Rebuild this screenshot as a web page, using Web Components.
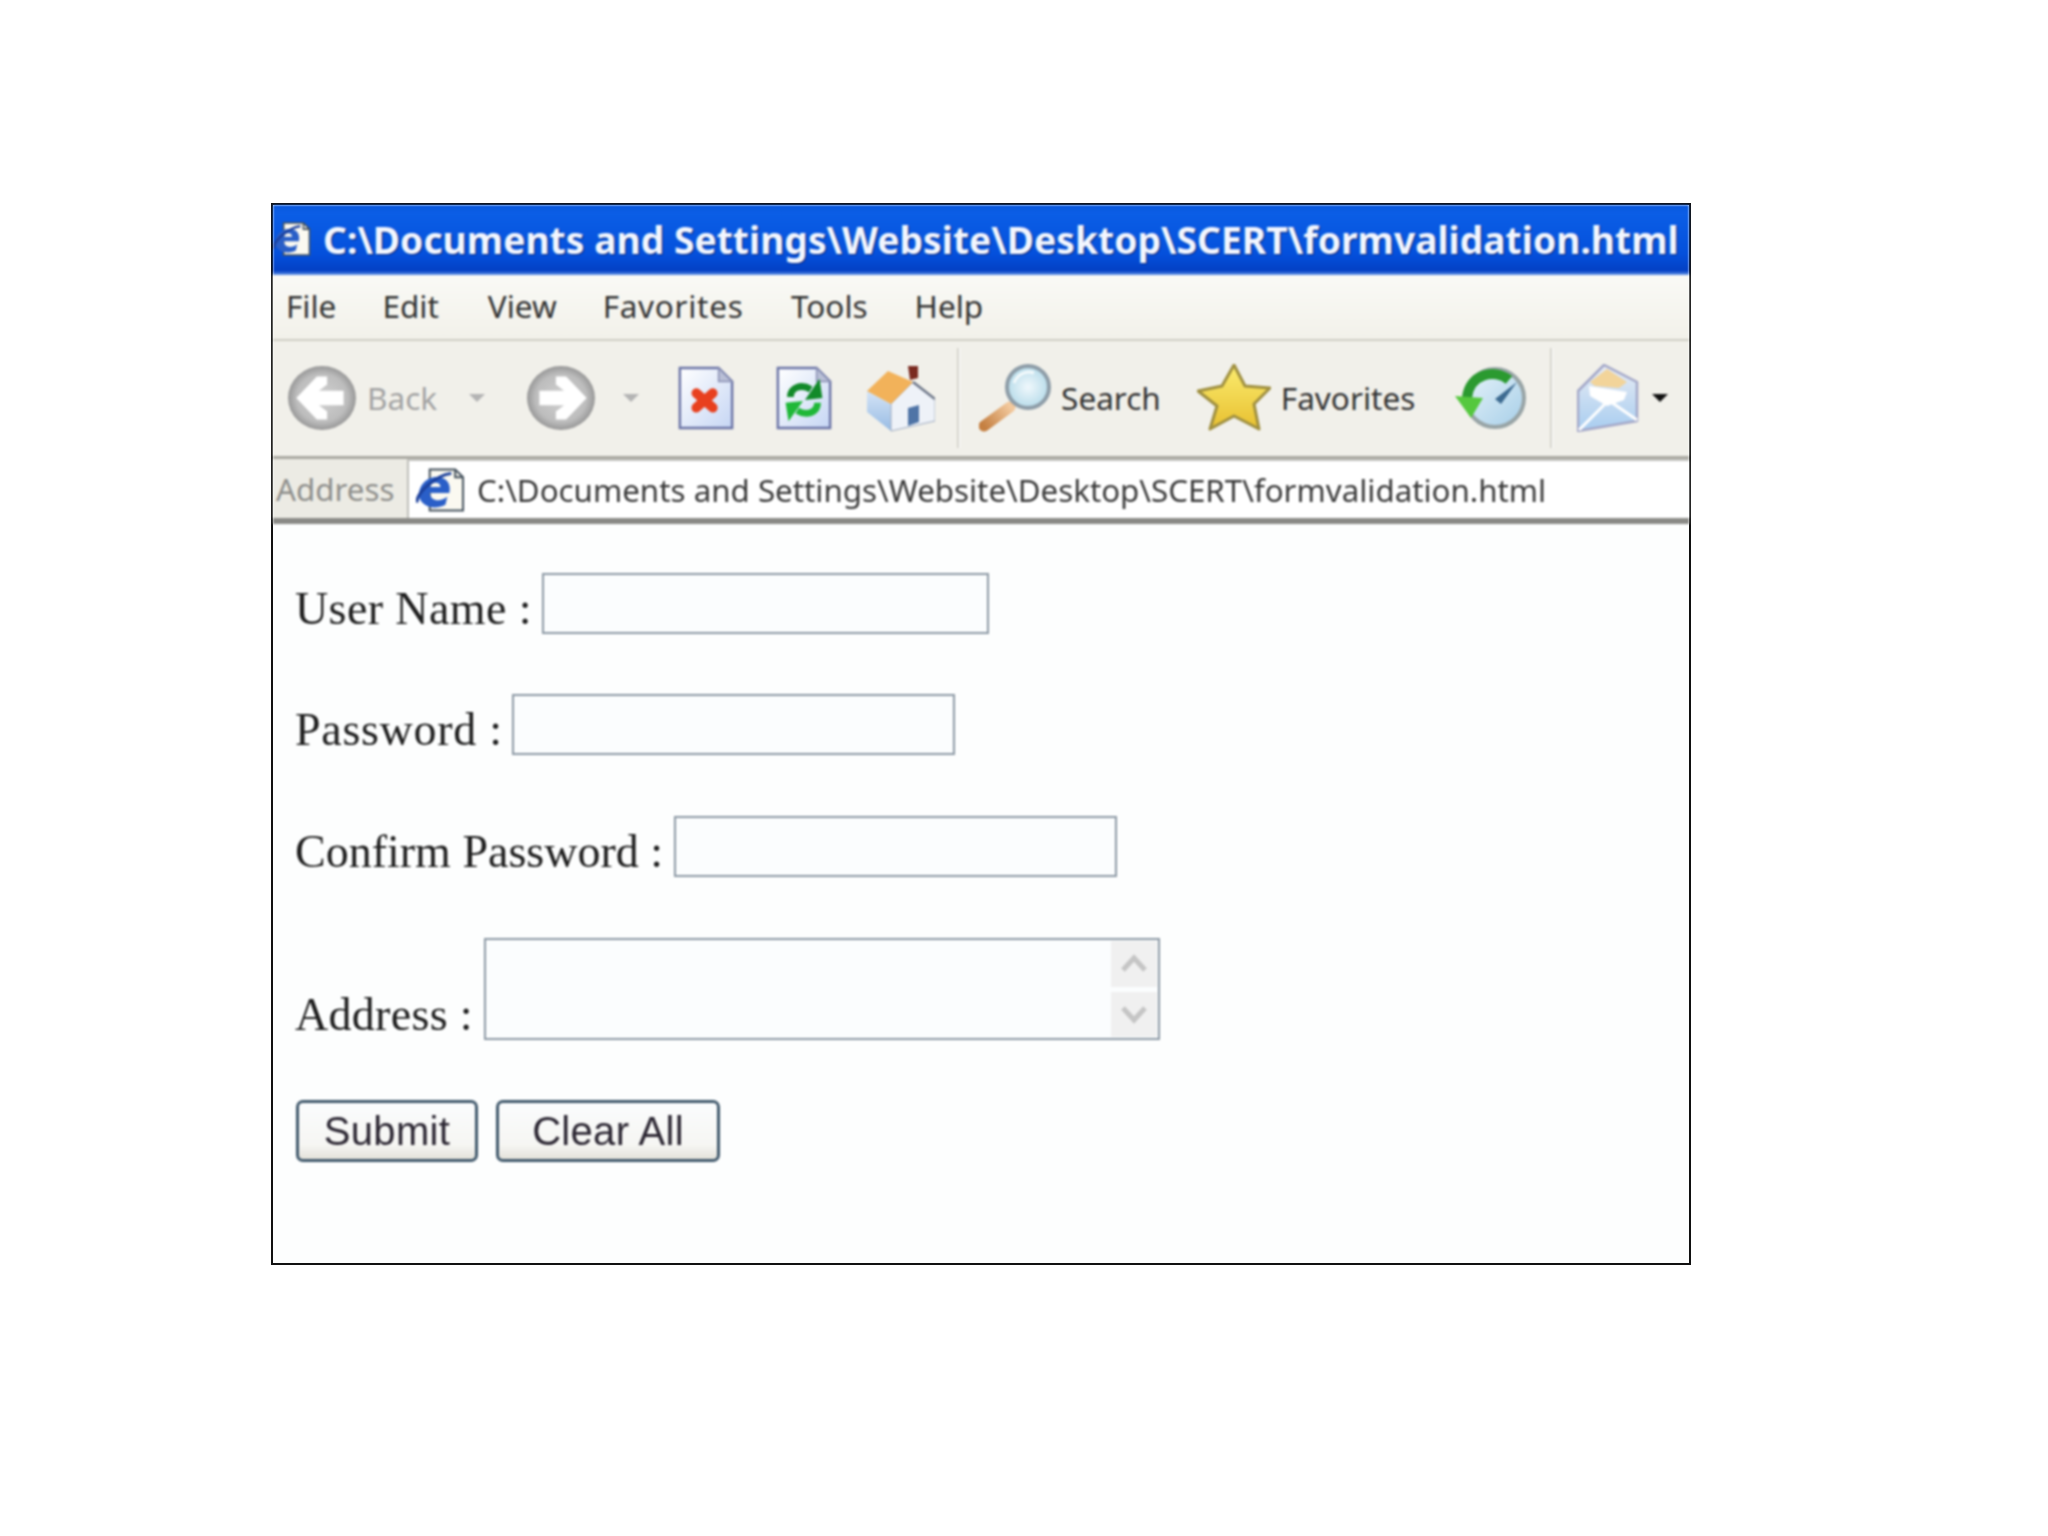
<!DOCTYPE html>
<html lang="en">
<head>
<meta charset="utf-8">
<title>Form validation</title>
<style>
  html, body { margin: 0; background: #fff; }
  body { padding: 203px 0 0 271px; height: 1333px; overflow: hidden; }
</style>
</head>
<body>
<xp-window>
  <xp-titlebar slot="chrome">C:\Documents and Settings\Website\Desktop\SCERT\formvalidation.html</xp-titlebar>
  <xp-menubar slot="chrome">
    <span style="margin-left:13px">File</span>
    <span style="margin-left:46px">Edit</span>
    <span style="margin-left:49px">View</span>
    <span style="margin-left:46px;letter-spacing:.7px">Favorites</span>
    <span style="margin-left:47.5px">Tools</span>
    <span style="margin-left:47px">Help</span>
  </xp-menubar>
  <xp-toolbar slot="chrome">
    <xp-tool icon="back" w="70" h="66" style="margin-left:14px" muted>Back</xp-tool>
    <xp-drop style="margin-left:32px" muted></xp-drop>
    <xp-tool icon="forward" w="70" h="66" style="margin-left:41px"></xp-tool>
    <xp-drop style="margin-left:27px" muted></xp-drop>
    <xp-tool icon="stop" w="60" h="66" style="margin-left:37px"></xp-tool>
    <xp-tool icon="refresh" w="60" h="66" style="margin-left:38px"></xp-tool>
    <xp-tool icon="home" w="68" h="68" style="margin-left:33px"></xp-tool>
    <xp-sep style="margin-left:22px"></xp-sep>
    <xp-tool icon="search" w="72" h="68" style="margin-left:19px">Search</xp-tool>
    <xp-tool icon="star" w="74" h="68" style="margin-left:36px">Favorites</xp-tool>
    <xp-tool icon="media" w="72" h="64" style="margin-left:40px"></xp-tool>
    <xp-sep style="margin-left:23px"></xp-sep>
    <xp-tool icon="mail" w="64" h="68" style="margin-left:24px"></xp-tool>
    <xp-drop style="margin-left:11px"></xp-drop>
  </xp-toolbar>
  <xp-addressbar slot="chrome">C:\Documents and Settings\Website\Desktop\SCERT\formvalidation.html</xp-addressbar>

  <form-field width="447" gap="10.6" spacing=".4">User Name :</form-field>
  <form-field width="443" gap="9" spacing=".7" style="margin-top:60px" type="password">Password :</form-field>
  <form-field width="443" gap="11" style="margin-top:61px" type="password">Confirm Password :</form-field>
  <form-field width="676" gap="11.3" spacing=".3" style="margin-top:61px" multiline>Address :</form-field>
  <form-actions style="margin-top:60px">
    <xp-button style="width:182px">Submit</xp-button>
    <xp-button style="width:224px">Clear All</xp-button>
  </form-actions>
</xp-window>

<script>
const PAGE = (inner) => `
  <path d="M4 2H44L58 16V64H4Z" fill="url(#page)" stroke="#6b74a6" stroke-width="2.5"/>
  <path d="M44 2V16H58Z" fill="#b9bfd6" stroke="#8a90b4" stroke-width="1.5"/>
  ${inner}`;

const ICONS = {
  back: {
    box: "0 0 68 64",
    svg: `<ellipse cx="34" cy="32" rx="33" ry="31" fill="url(#disc)"/>
      <path d="M9 32 29 11H39V19L31 25H55V39H31L39 45V53H29Z" fill="#fff"/>`,
  },
  forward: {
    box: "0 0 68 64",
    svg: `<ellipse cx="34" cy="32" rx="33" ry="31" fill="url(#disc)"/>
      <path d="M59 32 39 11H29V19L37 25H13V39H37L29 45V53H39Z" fill="#fff"/>`,
  },
  stop: {
    box: "0 0 62 66",
    svg: PAGE(`<path d="M21 28 38 43M38 28 21 43" stroke="#e8401e" stroke-width="10" stroke-linecap="round"/>`),
  },
  refresh: {
    box: "0 0 62 66",
    svg: PAGE(`<path d="M17 32C17 22 28 18 38 24" fill="none" stroke="#128a2a" stroke-width="7"/>
      <path d="M32 35 50 33 47 13Z" fill="#128a2a"/>
      <path d="M45 38C45 48 34 52 24 46" fill="none" stroke="#1fb838" stroke-width="7"/>
      <path d="M30 36 12 38 15 57Z" fill="#1fb838"/>`),
  },
  home: {
    box: "0 0 68 68",
    svg: `<path d="M0 27 24 40V67L0 48Z" fill="url(#wall)"/>
      <path d="M24 40 46 18 68 35V57L24 67Z" fill="#eef2f8" stroke="#a0acc0" stroke-width="1"/>
      <path d="M41 2H51V14L43 16Z" fill="#7a2a20"/>
      <path d="M0 27 21 7 46 18 24 40Z" fill="#f2b25a"/>
      <path d="M46 18 68 35" stroke="#6d7688" stroke-width="2.5"/>
      <path d="M41 44 52 41V58L41 62Z" fill="#4f74a6"/>`,
  },
  search: {
    box: "0 0 72 68",
    svg: `<path d="M31 43 5 62" stroke="url(#handle)" stroke-width="11" stroke-linecap="round"/>
      <circle cx="49" cy="23" r="21" fill="url(#lens)" stroke="#8e9da8" stroke-width="4"/>
      <path d="M35 19C38 10 48 6 55 9" stroke="#fff" stroke-width="3" fill="none" opacity=".8"/>`,
  },
  star: {
    box: "0 0 74 68",
    svg: `<path d="M37 1 48 22 73 24 57 40 62 65 37 52 13 65 20 42 1 27 25 22Z" fill="url(#gold)" stroke="#a09040" stroke-width="3" stroke-linejoin="round"/>`,
  },
  media: {
    box: "0 0 72 64",
    svg: `<circle cx="40" cy="32" r="29" fill="url(#globe)" stroke="#98a4a6" stroke-width="4"/>
      <path d="M62 16 40 33 46 38Z" fill="#3c6a90"/>
      <path d="M54 14C40 2 14 8 12 32" fill="none" stroke="#2b9a30" stroke-width="10"/>
      <path d="M0 30 28 32 16 52Z" fill="#55c83e"/>`,
  },
  mail: {
    box: "0 0 64 68",
    svg: `<path d="M1 27 27 1 60 18V57L1 67Z" fill="url(#env)" stroke="#a4a8c8" stroke-width="2.5" stroke-linejoin="round"/>
      <path d="M13 18 30 5 50 18 42 24 18 22Z" fill="#f2d49a"/>
      <path d="M12 22 50 28 47 36 30 42 13 32Z" fill="#fff"/>
      <path d="M2 66 28 40M60 56 34 38" fill="none" stroke="#fff" stroke-width="3"/>`,
  },
  ie: {
    box: "0 0 50 46",
    svg: `<path d="M14 2H40L48 10V44H14Z" fill="#fbf9f1" stroke="#43505c" stroke-width="2"/>
      <path d="M40 2V10H48" fill="none" stroke="#43505c" stroke-width="2"/>
      <path d="M3 30C2 18 12 8 24 10 32 11 36 18 34 26H14C15 34 24 36 32 30L30 38C18 44 6 40 3 30ZM14 20H25C25 14 16 14 14 20Z" fill="#2a5fc8"/>
      <path d="M1 36C0 26 20 8 36 6" fill="none" stroke="#1b3f9a" stroke-width="3"/>`,
  },
};

const GRADIENTS = `<defs>
  <linearGradient id="page" x1="0" y1="0" x2="1" y2="1"><stop offset="0" stop-color="#fff"/><stop offset="1" stop-color="#c6d6f4"/></linearGradient>
  <radialGradient id="disc" cx=".5" cy=".5" r=".5"><stop offset="0" stop-color="#d0d0d0"/><stop offset=".75" stop-color="#bdbdbd"/><stop offset="1" stop-color="#989898"/></radialGradient>
  <linearGradient id="wall" x1="0" y1="0" x2="0" y2="1"><stop offset="0" stop-color="#d4e4f6"/><stop offset="1" stop-color="#98bce4"/></linearGradient>
  <linearGradient id="handle" gradientUnits="userSpaceOnUse" x1="5" y1="62" x2="31" y2="43"><stop offset="0" stop-color="#c58042"/><stop offset="1" stop-color="#f2c89c"/></linearGradient>
  <radialGradient id="lens"><stop offset="0" stop-color="#f0f8fc"/><stop offset="1" stop-color="#b8dcea"/></radialGradient>
  <linearGradient id="gold" x1="0" y1="0" x2="0" y2="1"><stop offset="0" stop-color="#fbec70"/><stop offset="1" stop-color="#e8c030"/></linearGradient>
  <linearGradient id="globe" x1="0" y1="0" x2="1" y2="1"><stop offset="0" stop-color="#e8f4fa"/><stop offset="1" stop-color="#a6cee8"/></linearGradient>
  <linearGradient id="env" x1="0" y1="0" x2="0" y2="1"><stop offset="0" stop-color="#e8ecf4"/><stop offset="1" stop-color="#a8cdf0"/></linearGradient>
</defs>`;

const UI_FONT = `"Noto Sans", "DejaVu Sans", sans-serif`;

// small helper so every element below stays a few lines long
function shadow(el, html) {
  el.attachShadow({ mode: "open" }).innerHTML = html;
}

class XpIcon extends HTMLElement {
  connectedCallback() {
    const icon = ICONS[this.getAttribute("name")];
    const w = this.getAttribute("w");
    const h = this.getAttribute("h");
    shadow(this, `<style>:host{display:block;line-height:0}</style>
      <svg width="${w}" height="${h}" viewBox="${icon.box}">${GRADIENTS}${icon.svg}</svg>`);
  }
}

class XpWindow extends HTMLElement {
  constructor() {
    super();
    // the reference is a soft upscaled capture, so the inside gets a slight blur; the frame stays crisp
    shadow(this, `<style>
      :host { display:block; box-sizing:border-box; width:1420px; height:1062px; border:2px solid #111; background:#fdfefe; }
      .inner { display:flex; flex-direction:column; height:100%; overflow:hidden; filter:blur(.9px); }
      .content { display:flex; flex-direction:column; padding:49px 0 0 22px; }
    </style>
    <div class="inner">
      <slot name="chrome"></slot>
      <div class="content"><slot></slot></div>
    </div>`);
  }
}

class XpTitlebar extends HTMLElement {
  constructor() {
    super();
    shadow(this, `<style>
      :host { display:flex; align-items:center; gap:12px; height:70px; box-sizing:border-box; padding-bottom:2px;
              background:linear-gradient(#0a58dc,#0b5ee6 12%,#0450dc 70%,#0340c4 94%,#6a9ae8);
              color:#f2f6ff; font:700 37.25px ${UI_FONT}; white-space:nowrap; text-shadow:1px 1px 1px #0a2a80; }
    </style><xp-icon name="ie" w="38" h="40"></xp-icon><slot></slot>`);
  }
}

class XpMenubar extends HTMLElement {
  constructor() {
    super();
    shadow(this, `<style>
      :host { display:flex; align-items:center; height:66px; box-sizing:border-box; padding-bottom:3px;
              background:linear-gradient(#fafaf6,#f2f1ea); border-bottom:2px solid #cfcec4;
              color:#333; font:31.5px ${UI_FONT}; }
    </style><slot></slot>`);
  }
}

class XpToolbar extends HTMLElement {
  constructor() {
    super();
    shadow(this, `<style>
      :host { display:flex; align-items:center; height:118px; box-sizing:border-box; padding-bottom:2px;
              background:#f1f0ea; border-bottom:3px solid #aaa9a2; font:31.5px ${UI_FONT}; color:#333; }
    </style><slot></slot>`);
  }
}

class XpTool extends HTMLElement {
  connectedCallback() {
    const muted = this.hasAttribute("muted");
    shadow(this, `<style>
      :host { display:flex; align-items:center; gap:10px; flex:none; color:${muted ? "#a3a3a3" : "#333"}; }
    </style>
    <xp-icon name="${this.getAttribute("icon")}" w="${this.getAttribute("w")}" h="${this.getAttribute("h")}"></xp-icon>
    <slot></slot>`);
  }
}

class XpDrop extends HTMLElement {
  connectedCallback() {
    const color = this.hasAttribute("muted") ? "#b4b4b4" : "#111";
    shadow(this, `<style>
      :host { display:block; width:0; height:0; flex:none; border:8px solid transparent; border-bottom:0;
              border-top-color:${color}; }
    </style>`);
  }
}

class XpSep extends HTMLElement {
  constructor() {
    super();
    shadow(this, `<style>
      :host { display:block; flex:none; width:2px; height:100px; background:#d5d4cc; border-right:1px solid #fff; }
    </style>`);
  }
}

class XpAddressbar extends HTMLElement {
  constructor() {
    super();
    shadow(this, `<style>
      :host { display:flex; height:65px; box-sizing:border-box; background:#ecebe4;
              border-bottom:6px solid #8a8a86; font:31.3px ${UI_FONT}; }
      .label { width:134px; box-sizing:border-box; padding:0 0 0 3px; display:flex; align-items:center; color:#8f8f8c; }
      .field { flex:1; display:flex; align-items:center; gap:12px; padding:0 0 0 7px; background:#fff;
               border-left:2px solid #bfbfba; border-top:2px solid #c4c4c0; color:#3a3a3a; white-space:nowrap; }
    </style>
    <div class="label">Address</div>
    <div class="field"><xp-icon name="ie" w="49" h="46"></xp-icon><slot></slot></div>`);
  }
}

class FormField extends HTMLElement {
  connectedCallback() {
    const width = this.getAttribute("width");
    const gap = this.getAttribute("gap");
    const spacing = this.getAttribute("spacing") || 0;
    const type = this.getAttribute("type") || "text";
    const control = this.hasAttribute("multiline")
      ? `<div class="area"><textarea></textarea>
           <div class="bar">
             <div class="btn"><svg width="30" height="22" viewBox="0 0 30 22"><path d="M4 17 15 5 26 17" fill="none" stroke="#c5c5c5" stroke-width="5"/></svg></div>
             <div class="btn"><svg width="30" height="22" viewBox="0 0 30 22"><path d="M4 5 15 17 26 5" fill="none" stroke="#c5c5c5" stroke-width="5"/></svg></div>
           </div></div>`
      : `<input type="${type}">`;
    shadow(this, `<style>
      :host { display:flex; align-items:flex-end; gap:${gap}px; font:46px "Liberation Serif", serif; color:#1e1e1e; letter-spacing:${spacing}px; }
      .label { line-height:1; padding-bottom:2px; white-space:nowrap; }
      input, textarea { display:block; box-sizing:border-box; margin:0; width:${width}px; height:61px; padding:0;
                        border:2.5px solid #8c98a4; background:#fbfdfe; outline:none; resize:none; overflow:hidden; }
      .area { position:relative; }
      textarea { height:102px; }
      .bar { position:absolute; top:3px; right:3px; bottom:3px; width:46px; display:flex; flex-direction:column; gap:5px; }
      .btn { flex:1; background:#f0f0f0; display:flex; align-items:center; justify-content:center; }
    </style><span class="label"><slot></slot></span>${control}`);
  }
}

class FormActions extends HTMLElement {
  constructor() {
    super();
    shadow(this, `<style>:host { display:flex; gap:18px; margin-left:1px; }</style><slot></slot>`);
  }
}

class XpButton extends HTMLElement {
  constructor() {
    super();
    shadow(this, `<style>
      :host { display:flex; align-items:center; justify-content:center; box-sizing:border-box; height:62px;
              border:3px solid #41596c; border-radius:7px; background:linear-gradient(#fbfcfd,#f6f6f3 75%,#e4e2da);
              font:40px "Liberation Sans", sans-serif; letter-spacing:.3px; color:#2c2733; }
    </style><slot></slot>`);
  }
}

customElements.define("xp-icon", XpIcon);
customElements.define("xp-window", XpWindow);
customElements.define("xp-titlebar", XpTitlebar);
customElements.define("xp-menubar", XpMenubar);
customElements.define("xp-toolbar", XpToolbar);
customElements.define("xp-tool", XpTool);
customElements.define("xp-drop", XpDrop);
customElements.define("xp-sep", XpSep);
customElements.define("xp-addressbar", XpAddressbar);
customElements.define("form-field", FormField);
customElements.define("form-actions", FormActions);
customElements.define("xp-button", XpButton);
</script>
</body>
</html>
